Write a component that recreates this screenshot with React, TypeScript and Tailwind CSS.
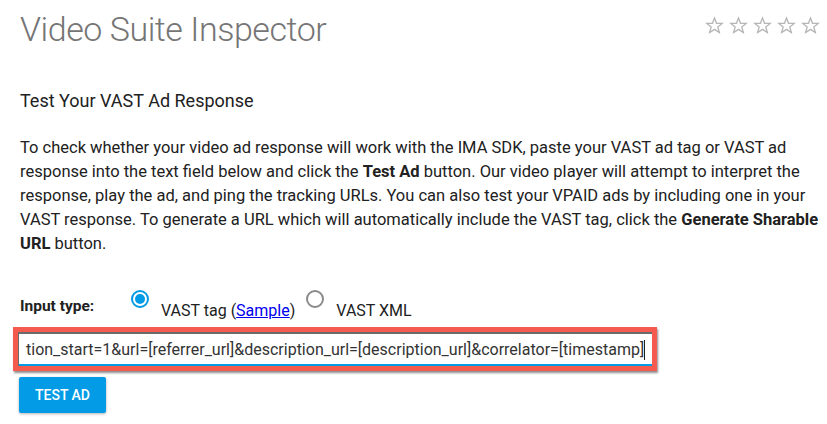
import React from "react";

const Star = () => (
  <svg width="19" height="19" viewBox="0 0 24 24" className="block">
    <polygon
      points="12,2.5 14.6,9.2 21.8,9.4 16.2,13.9 18.1,20.9 12,16.9 5.9,20.9 7.8,13.9 2.2,9.4 9.4,9.2"
      fill="none"
      stroke="#b5b5b5"
      strokeWidth="1.6"
      strokeLinejoin="miter"
    />
  </svg>
);

export default function App() {
  return (
    <div className="w-[827px] h-[424px] bg-white overflow-hidden font-['Roboto',sans-serif] text-[#212121]">
      <div className="pl-[20px] pr-[2px]">
        <div className="flex justify-between items-start pt-[9px] pr-[5px]">
          <h1 className="text-[34px] leading-[40px] font-light text-[#757575] tracking-[-0.45px]">
            Video Suite Inspector
          </h1>
          <div className="flex gap-[5px] mt-[7px]">
            <Star />
            <Star />
            <Star />
            <Star />
            <Star />
          </div>
        </div>

        <h2 className="mt-[40px] text-[18px] leading-[24px] font-normal">Test Your VAST Ad Response</h2>

        <p className="mt-[23px] w-[805px] text-[16.5px] leading-[24px]">
          To check whether your video ad response will work with the IMA SDK, paste your VAST ad tag or VAST ad
          response into the text field below and click the <b className="font-bold">Test Ad</b> button. Our video
          player will attempt to interpret the response, play the ad, and ping the tracking URLs. You can also test
          your VPAID ads by including one in your VAST response. To generate a URL which will automatically include
          the VAST tag, click the <b className="font-bold">Generate Sharable URL</b> button.
        </p>

        <div className="flex items-start mt-[34px] h-[37px]">
          <span className="mt-[7px] text-[15.5px] leading-[18px] font-bold w-[111px]">Input type:</span>
          <span className="w-[18px] h-[18px] rounded-full border-2 border-[#039be5] flex items-center justify-center">
            <span className="w-[10px] h-[10px] rounded-full bg-[#039be5]" />
          </span>
          <span className="ml-[12px] mt-[11px] text-[16px] leading-[20px]">
            VAST tag (<a className="text-[#0000ee] underline">Sample</a>)
          </span>
          <span className="ml-[11px] w-[18px] h-[18px] rounded-full border-2 border-[#8a8a8a]" />
          <span className="ml-[12px] mt-[11px] text-[16px] leading-[20px]">VAST XML</span>
        </div>

        <div className="-ml-[7px] w-[644px] h-[44px] border-[5px] border-[#f55a4e] shadow-[1px_2px_2px_rgba(0,0,0,0.45)]">
          <div className="h-full bg-white border-t-2 border-l border-[#6b6b6b] border-b-0 flex items-center relative">
            <span className="pl-[7px] text-[16px] leading-[20px] text-[#333] whitespace-nowrap">
              tion_start=1&amp;url=[referrer_url]&amp;description_url=[description_url]&amp;correlator=[timestamp]
            </span>
            <span className="w-px h-[20px] bg-[#222]" />
            <div className="absolute left-0 right-0 bottom-0 h-[2px] bg-[#039be5]" />
          </div>
        </div>

        <button className="mt-[6px] -ml-[1px] w-[87px] h-[36px] rounded-[2px] bg-[#039be5] text-white text-[14px] font-medium shadow-[0_1px_3px_rgba(0,0,0,0.3)]">
          TEST AD
        </button>
      </div>
    </div>
  );
}
